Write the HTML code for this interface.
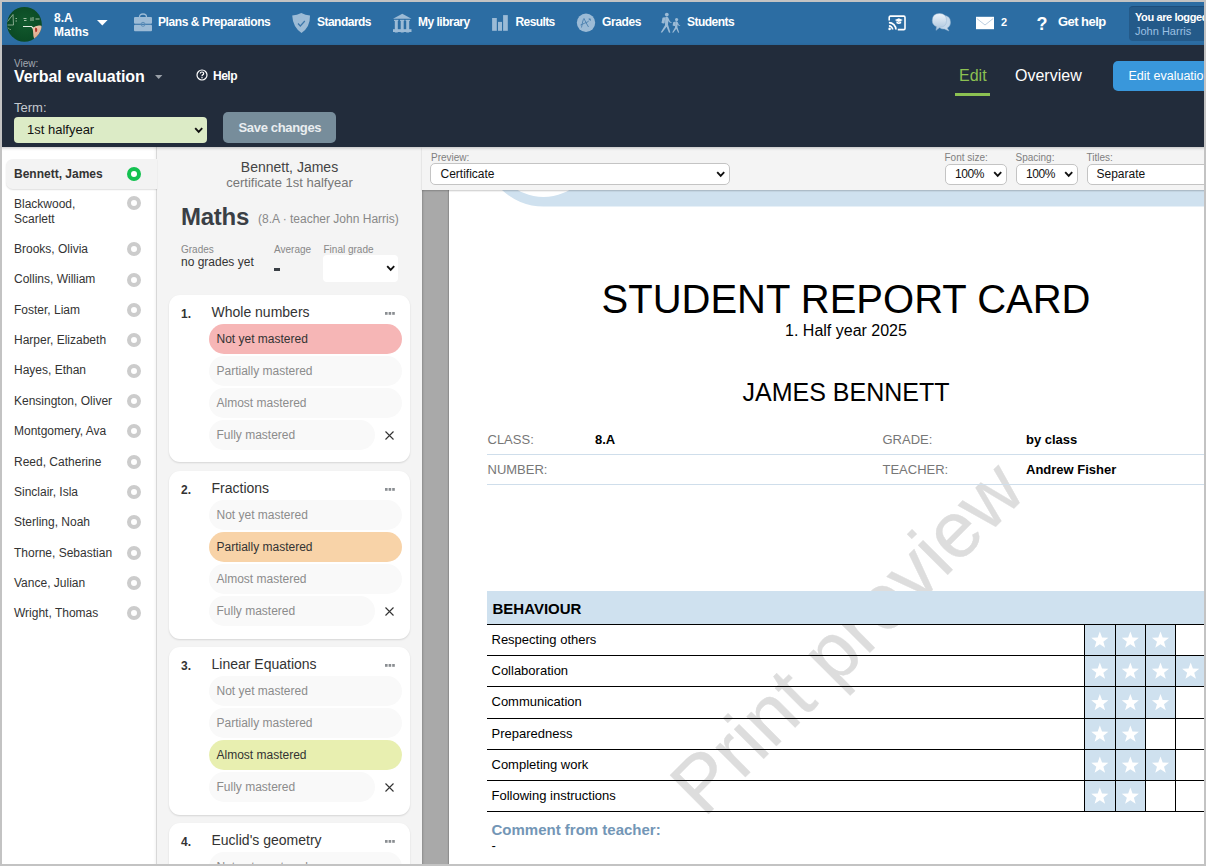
<!DOCTYPE html>
<html><head><meta charset="utf-8">
<style>
*{box-sizing:border-box;margin:0;padding:0}
html,body{width:1206px;height:866px;overflow:hidden;background:#fff;font-family:"Liberation Sans",sans-serif}
body{position:relative}
.a{position:absolute}
#border{position:absolute;left:0;top:0;width:1206px;height:866px;border:2px solid #c3c3c3;z-index:100}
#nav{position:absolute;left:0;top:0;width:1206px;height:45px;background:#2c6da3}
.nt{position:absolute;color:#fff;font-weight:bold;font-size:12px;white-space:nowrap;line-height:14px}
#hdr{position:absolute;left:0;top:45px;width:1206px;height:102px;background:#222c3b;z-index:10;box-shadow:0 1px 3px rgba(0,0,0,.22)}
#side{position:absolute;left:0;top:147px;width:157px;height:719px;background:#fff;border-right:1px solid #d8d8d8;z-index:2;box-shadow:inset -3px 0 3px -2px rgba(0,0,0,.05)}
.st{position:absolute;left:14px;font-size:12px;line-height:14.35px;color:#333;white-space:nowrap}
.rad{position:absolute;left:126.6px;width:14px;height:14px;border-radius:50%;border:4px solid #cccccc;background:#fff}
#mid{position:absolute;left:157px;top:147px;width:265px;height:719px;background:#f4f4f4}
#prev{position:absolute;left:422px;top:147px;width:784px;height:719px;background:#a9a9a9;box-shadow:inset 1px 0 2px rgba(0,0,0,.18)}
#tool{position:absolute;left:0;top:0;width:784px;height:43px;background:#f4f4f4;z-index:5;box-shadow:0 1px 1.5px rgba(0,0,0,.22)}
#page{position:absolute;left:27px;top:43px;width:757px;height:676px;background:#fff;overflow:hidden;box-shadow:-1px 0 1px rgba(0,0,0,.15)}
.card{position:absolute;left:12px;width:241px;height:167.5px;background:#fff;border-radius:11px;box-shadow:0 1px 2px rgba(0,0,0,.13)}
.num{position:absolute;left:12px;top:12px;font-size:12px;line-height:14px;font-weight:bold;color:#333}
.ct{position:absolute;left:42.5px;top:9px;font-size:14px;line-height:16px;color:#333;white-space:nowrap}
.opt{position:absolute;left:39.5px;width:193px;height:30px;border-radius:15px;background:#f9f9f9;font-size:12px;color:#8c8c8c;line-height:30px;padding-left:8px;white-space:nowrap}
.lb{font-size:10px;line-height:12px;color:#808080;white-space:nowrap}
.sbox{height:21.5px;background:#fff;border:1px solid #c4c4c4;border-radius:5px}
.sv{font-size:12px;line-height:14px;color:#111;white-space:nowrap}
.il{font-size:13px;line-height:15px;color:#777;white-space:nowrap}
.iv{font-size:13px;line-height:15px;color:#000;font-weight:bold;white-space:nowrap}
.tl{font-size:13px;line-height:15px;color:#000;white-space:nowrap}
</style></head><body>
<div id="border"></div>
<div id="nav">
 <svg class="a" style="left:0;top:0" width="50" height="45" viewBox="0 0 50 45">
  <defs><clipPath id="av"><circle cx="24.4" cy="24.3" r="17.4"/></clipPath>
  <radialGradient id="bg" cx="50%" cy="45%" r="60%"><stop offset="0" stop-color="#125a2e"/><stop offset="0.8" stop-color="#0b4a24"/><stop offset="1" stop-color="#073a1b"/></radialGradient></defs>
  <g clip-path="url(#av)">
   <rect x="6" y="6" width="38" height="38" fill="url(#bg)"/>
   <path d="M7.5 21.5 L13 14.5 L13.5 25 L7.5 25" stroke="#b9cdb6" stroke-width="0.7" fill="none"/>
   <path d="M15.5 18.5h1.5M15.5 21h1.5" stroke="#b9cdb6" stroke-width="0.8"/>
   <path d="M23.5 18.5h3M24 20.5h2.5M31 17.5v3.5M33 17v4M35.5 19h4" stroke="#c8d8c4" stroke-width="0.8"/>
   <path d="M23 26.5h8.5l2.5 2.5" stroke="#e6eee4" stroke-width="1.1" fill="none"/>
   <path d="M8 27.5l1.5 2M10 29l1 1" stroke="#9fb89c" stroke-width="0.7"/>
   <defs><linearGradient id="hd" x1="0" y1="0" x2="0.3" y2="1"><stop offset="0" stop-color="#f0c9b0"/><stop offset="1" stop-color="#d9a184"/></linearGradient></defs><path d="M32.5 28 Q36 25 40 25.5 Q43 26 43 30 L43 42 L34.5 40 Q33 36 33 31 Z" fill="url(#hd)"/>
   <path d="M35.2 27.8 Q37.3 27.3 37.3 30 Q37 32.5 35.5 32.3 Q34.7 30 35.2 27.8Z" fill="#b0342a"/>
  </g>
 </svg>
 <div class="nt" style="left:54px;top:10.6px;font-size:12px">8.A</div>
 <div class="nt" style="left:54px;top:24.8px;font-size:12px">Maths</div>
 <svg class="a" style="left:97px;top:20px" width="11" height="6"><path d="M0 0H10.6L5.3 5.4Z" fill="#fff"/></svg>
 <svg class="a" style="left:133px;top:13px" width="21" height="20" viewBox="0 0 21 20" fill="#9cbbd6">
  <path d="M6.5 4 Q6.5 1 10 1 Q13.5 1 13.5 4" stroke="#9cbbd6" stroke-width="1.3" fill="none"/>
  <rect x="1" y="4" width="18" height="6.8" rx="1"/>
  <rect x="1" y="11.8" width="18" height="6.4" rx="1"/>
  <circle cx="10" cy="11.3" r="2" fill="none" stroke="#5e8fb9" stroke-width="1"/>
 </svg>
 <div class="nt" style="left:158px;top:14.5px;font-size:12px;letter-spacing:-0.42px">Plans &amp; Preparations</div>
 <svg class="a" style="left:291px;top:12px" width="21" height="22" viewBox="0 0 21 22">
  <path d="M10.3 0.9 Q14.5 3 19 3.5 Q19.3 15 10.5 21 Q1.8 15 1.2 3.5 Q6 3 10.3 0.9Z" fill="#9cbbd6"/>
  <path d="M7 11.5 L9.3 14 L13.8 9" stroke="#3d77aa" stroke-width="1.2" fill="none"/>
 </svg>
 <div class="nt" style="left:317px;top:14.5px;font-size:12px;letter-spacing:-0.52px">Standards</div>
 <svg class="a" style="left:392px;top:13px" width="21" height="20" viewBox="0 0 21 20" fill="#9cbbd6">
  <path d="M10.3 0.7 L19.5 5.8 L1 5.8Z"/>
  <rect x="2" y="6.8" width="4.3" height="1.2"/><rect x="2.8" y="7.5" width="3" height="12" />
  <rect x="8.1" y="6.8" width="4.2" height="1.2"/><rect x="8.7" y="7.5" width="3" height="12"/>
  <rect x="13.6" y="6.8" width="4.3" height="1.2"/><rect x="14.2" y="7.5" width="3" height="12"/>
  <rect x="1" y="16.2" width="18.5" height="2.8"/>
 </svg>
 <div class="nt" style="left:418px;top:14.5px;font-size:12px;letter-spacing:-0.5px">My library</div>
 <svg class="a" style="left:492px;top:15px" width="17" height="17" viewBox="0 0 17 17" fill="#9cbbd6">
  <rect x="0.1" y="3" width="4.7" height="12.8"/><rect x="6" y="6.9" width="4" height="8.9"/><rect x="11.1" y="0.1" width="4.7" height="15.7"/>
 </svg>
 <div class="nt" style="left:515.5px;top:14.5px;font-size:12px;letter-spacing:-0.6px">Results</div>
 <svg class="a" style="left:576px;top:13px" width="20" height="20" viewBox="0 0 20 20">
  <circle cx="10" cy="9.7" r="9.2" fill="#9cbbd6"/>
  <path d="M5.5 14.5 Q7 6 8 5.5 Q9.5 9 12.5 14 M4.5 12 Q9 10 12.5 8.5 M13 5.2 l1.6 2.5 M12.6 7 l2.4 -1" stroke="#4a7fae" stroke-width="0.9" fill="none"/>
 </svg>
 <div class="nt" style="left:602px;top:14.5px;font-size:12px;letter-spacing:-0.4px">Grades</div>
 <svg class="a" style="left:660px;top:12px" width="22" height="22" viewBox="0 0 22 22" fill="#9cbbd6">
  <circle cx="6.8" cy="2.6" r="1.9"/>
  <path d="M5.2 5.2 Q7 4.3 8.2 5.4 L10 9.5 L11.7 10.3 L11.3 11 L9.2 10.3 L8.4 8.8 L8 12.5 L10.4 20.5 L9 20.8 L6.6 14.8 L2 20.8 L0.8 20.2 L5 13.3 Z"/>
  <path d="M2.5 5.8 Q4 4.8 5.2 5.6 L4.6 11.3 Q2.6 11.6 1.5 10.8 Z"/>
  <circle cx="16.6" cy="7.6" r="1.6"/>
  <path d="M15.3 9.6 Q16.7 9 17.6 9.9 L18.9 12.7 L20.3 13.4 L20 14 L18.3 13.4 L17.6 12.4 L17.4 15.3 L19.2 20.5 L18.2 20.8 L16.3 16.7 L13.2 20.8 L12.2 20.4 L15 15.5 Z"/>
  <path d="M13.2 10.3 Q14.3 9.6 15.3 10 L15 14 Q13.6 14.3 12.6 13.6 Z"/>
 </svg>
 <div class="nt" style="left:687px;top:14.5px;font-size:12px;letter-spacing:-0.54px">Students</div>
 <svg class="a" style="left:888px;top:15px" width="19" height="16" viewBox="0 0 19 16">
  <path d="M1.2 5.5 V2.4 Q1.2 1.1 2.4 1.1 H15.8 Q17 1.1 17 2.4 V13.4 Q17 14.6 15.8 14.6 H9.8" stroke="#fff" stroke-width="1.6" fill="none"/>
  <path d="M0.9 7.6 A7 7 0 0 1 7.9 14.6 M0.9 10.9 A3.7 3.7 0 0 1 4.6 14.6" stroke="#fff" stroke-width="1.7" fill="none"/>
  <circle cx="1.6" cy="13.9" r="1.3" fill="#fff"/>
  <path d="M10.8 3.3 L14.8 5.1 L10.8 6.9 L6.8 5.1Z M8.4 6.3 V8.2 Q10.8 9.8 13.2 8.2 V6.3 L10.8 7.5Z" fill="#fff"/>
 </svg>
 <svg class="a" style="left:931px;top:13px" width="21" height="19" viewBox="0 0 21 19">
  <defs><linearGradient id="cg" x1="0" y1="0" x2="0" y2="1"><stop offset="0" stop-color="#eef4fa"/><stop offset="1" stop-color="#a8c3dc"/></linearGradient></defs>
  <path d="M12.5 2.5 Q19.5 2.5 19.5 9.3 Q19.5 13.5 16.3 15 L18 18 L13.4 16 Q8 16.5 7 11 Z" fill="#c5d8ea" stroke="#8fb0cf" stroke-width="0.5"/>
  <path d="M8.5 0.5 Q15.5 0.5 15.5 7.5 Q15.5 14 9 14.3 L5 17.3 L5.7 13.7 Q1.3 12 1.3 7.5 Q1.3 0.5 8.5 0.5Z" fill="url(#cg)" stroke="#9db9d4" stroke-width="0.5"/>
 </svg>
 <svg class="a" style="left:976px;top:16px" width="19" height="14" viewBox="0 0 19 14">
  <rect x="0" y="0.8" width="18" height="12.4" fill="#fff"/>
  <path d="M0.8 2.5 L9 9 L17.2 2.5" stroke="#9db9d4" stroke-width="0.7" fill="none"/>
 </svg>
 <div class="nt" style="left:1001px;top:15px;font-size:11px">2</div>
 <div class="nt" style="left:1036.5px;top:13.5px;font-size:18px;line-height:20px">?</div>
 <div class="nt" style="left:1058px;top:14.5px;font-size:13px;letter-spacing:-0.55px">Get help</div>
 <div class="a" style="left:1129px;top:6px;width:90px;height:35px;background:#245a89;border-radius:4px;border-top:1px solid #1d4e7c"></div>
 <div class="nt" style="left:1135px;top:9.5px;font-size:11px;letter-spacing:-0.4px">You are logged in</div>
 <div class="nt" style="left:1135px;top:23.8px;font-size:11px;font-weight:normal;color:#9cc0e3">John Harris</div>
</div>
<div id="hdr">
 <div class="a" style="left:14px;top:12.5px;font-size:10px;line-height:12px;color:#a3a9b1">View:</div>
 <div class="a" style="left:14px;top:22.5px;font-size:16px;line-height:18px;font-weight:bold;color:#fff;white-space:nowrap;letter-spacing:-0.05px">Verbal evaluation</div>
 <svg class="a" style="left:155px;top:29.5px" width="8" height="5"><path d="M0 0H7.4L3.7 4Z" fill="#9aa0a8"/></svg>
 <svg class="a" style="left:195.5px;top:24px" width="12" height="12" viewBox="0 0 12 12"><circle cx="6" cy="6" r="5" stroke="#fff" stroke-width="1.2" fill="none"/><path d="M4.3 4.6 Q4.3 3 6 3 Q7.7 3 7.7 4.5 Q7.7 5.4 6.6 5.9 Q6 6.2 6 7.2" stroke="#fff" stroke-width="1.2" fill="none"/><circle cx="6" cy="8.8" r="0.75" fill="#fff"/></svg>
 <div class="a" style="left:213px;top:23.5px;font-size:12px;line-height:14px;font-weight:bold;color:#fff;letter-spacing:-0.5px">Help</div>
 <div class="a" style="left:14px;top:54.5px;font-size:13px;line-height:15px;color:#c3c8ce">Term:</div>
 <div class="a" style="left:14px;top:72px;width:193px;height:26px;background:#dcebc6;border-radius:4px"></div>
 <div class="a" style="left:27px;top:76.5px;font-size:13px;line-height:15px;color:#111">1st halfyear</div>
 <svg class="a" style="left:194px;top:82px" width="10" height="7" viewBox="0 0 10 7"><path d="M1.2 1.2 L4.7 4.8 L8.2 1.2" stroke="#111" stroke-width="1.9" fill="none"/></svg>
 <div class="a" style="left:223px;top:67px;width:113px;height:31px;background:#778d9b;border-radius:5px"></div>
 <div class="a" style="left:238.5px;top:74.5px;font-size:13px;line-height:15px;font-weight:bold;color:#e9edf0;letter-spacing:-0.33px">Save changes</div>
 <div class="a" style="left:959px;top:21.5px;font-size:16px;line-height:18px;color:#8cc152">Edit</div>
 <div class="a" style="left:955px;top:48px;width:35px;height:2.5px;background:#8cc152"></div>
 <div class="a" style="left:1015px;top:21.5px;font-size:16px;line-height:18px;color:#fff">Overview</div>
 <div class="a" style="left:1113px;top:16px;width:120px;height:30px;background:#3997db;border-radius:5px"></div>
 <div class="a" style="left:1128.5px;top:23.5px;font-size:12.5px;line-height:15px;color:#fff;white-space:nowrap">Edit evaluation</div>
</div>
<div id="side">
<div class="a" style="left:6px;top:12.00px;width:151px;height:30.35px;background:#f3f3f3;border-radius:7px 0 0 7px;box-shadow:0 1px 1.5px rgba(0,0,0,.13);z-index:3"></div>
<div class="st" style="top:20.00px;font-weight:bold;z-index:4">Bennett, James</div>
<div class="rad" style="top:20.18px;border-color:#13c150;z-index:4"></div>
<div class="st" style="top:50.35px;z-index:4">Blackwood,<br>Scarlett</div>
<div class="rad" style="top:49.35px;border-color:#cccccc;z-index:4"></div>
<div class="st" style="top:95.05px;z-index:4">Brooks, Olivia</div>
<div class="rad" style="top:95.23px;border-color:#cccccc;z-index:4"></div>
<div class="st" style="top:125.40px;z-index:4">Collins, William</div>
<div class="rad" style="top:125.58px;border-color:#cccccc;z-index:4"></div>
<div class="st" style="top:155.75px;z-index:4">Foster, Liam</div>
<div class="rad" style="top:155.93px;border-color:#cccccc;z-index:4"></div>
<div class="st" style="top:186.10px;z-index:4">Harper, Elizabeth</div>
<div class="rad" style="top:186.28px;border-color:#cccccc;z-index:4"></div>
<div class="st" style="top:216.45px;z-index:4">Hayes, Ethan</div>
<div class="rad" style="top:216.63px;border-color:#cccccc;z-index:4"></div>
<div class="st" style="top:246.80px;z-index:4">Kensington, Oliver</div>
<div class="rad" style="top:246.98px;border-color:#cccccc;z-index:4"></div>
<div class="st" style="top:277.15px;z-index:4">Montgomery, Ava</div>
<div class="rad" style="top:277.33px;border-color:#cccccc;z-index:4"></div>
<div class="st" style="top:307.50px;z-index:4">Reed, Catherine</div>
<div class="rad" style="top:307.68px;border-color:#cccccc;z-index:4"></div>
<div class="st" style="top:337.85px;z-index:4">Sinclair, Isla</div>
<div class="rad" style="top:338.03px;border-color:#cccccc;z-index:4"></div>
<div class="st" style="top:368.20px;z-index:4">Sterling, Noah</div>
<div class="rad" style="top:368.38px;border-color:#cccccc;z-index:4"></div>
<div class="st" style="top:398.55px;z-index:4">Thorne, Sebastian</div>
<div class="rad" style="top:398.73px;border-color:#cccccc;z-index:4"></div>
<div class="st" style="top:428.90px;z-index:4">Vance, Julian</div>
<div class="rad" style="top:429.08px;border-color:#cccccc;z-index:4"></div>
<div class="st" style="top:459.25px;z-index:4">Wright, Thomas</div>
<div class="rad" style="top:459.43px;border-color:#cccccc;z-index:4"></div>
</div>
<div id="mid">
<div class="a" style="left:0;top:11.5px;width:265px;text-align:center;font-size:14px;line-height:16px;color:#444">Bennett, James</div>
<div class="a" style="left:0;top:27.5px;width:265px;text-align:center;font-size:13px;line-height:15px;color:#777">certificate 1st halfyear</div>
<div class="a" style="left:24px;top:55.5px;font-size:24px;line-height:27px;font-weight:bold;color:#3a3f45;letter-spacing:-0.25px">Maths</div>
<div class="a" style="left:101px;top:64.5px;font-size:12px;line-height:14px;color:#888;white-space:nowrap">(8.A · teacher John Harris)</div>
<div class="a" style="left:24px;top:97px;font-size:10px;line-height:12px;color:#888">Grades</div>
<div class="a" style="left:24px;top:108px;font-size:12px;line-height:14px;color:#333;white-space:nowrap">no grades yet</div>
<div class="a" style="left:117px;top:97px;font-size:10px;line-height:12px;color:#888">Average</div>
<div class="a" style="left:117px;top:120.5px;width:6px;height:3px;background:#3a3f45"></div>
<div class="a" style="left:166.5px;top:97px;font-size:10px;line-height:12px;color:#888;white-space:nowrap">Final grade</div>
<div class="a" style="left:166px;top:108px;width:75px;height:27px;background:#fff;border-radius:4px"></div>
<svg class="a" style="left:229px;top:118px" width="10" height="7" viewBox="0 0 10 7"><path d="M1.2 1.2 L4.7 4.8 L8.2 1.2" stroke="#111" stroke-width="1.9" fill="none"/></svg>
<div class="card" style="top:147.5px"><div class="num">1.</div><div class="ct">Whole numbers</div><svg class="a" style="left:216px;top:17px" width="11" height="3"><rect x="0" y="0" width="2.6" height="2.8" fill="#8a8e92"/><rect x="3.6" y="0" width="2.6" height="2.8" fill="#8a8e92"/><rect x="7.2" y="0" width="2.6" height="2.8" fill="#8a8e92"/></svg><div class="opt" style="top:29.3px;background:#f6b6b6;color:#333;">Not yet mastered</div><div class="opt" style="top:61.3px;">Partially mastered</div><div class="opt" style="top:93.3px;">Almost mastered</div><div class="opt" style="top:125.3px;width:166px;">Fully mastered</div><svg class="a" style="left:216px;top:136px" width="9" height="9" viewBox="0 0 9 9"><path d="M0.5 0.5L8.5 8.5M8.5 0.5L0.5 8.5" stroke="#333" stroke-width="1.1"/></svg></div>
<div class="card" style="top:324px"><div class="num">2.</div><div class="ct">Fractions</div><svg class="a" style="left:216px;top:17px" width="11" height="3"><rect x="0" y="0" width="2.6" height="2.8" fill="#8a8e92"/><rect x="3.6" y="0" width="2.6" height="2.8" fill="#8a8e92"/><rect x="7.2" y="0" width="2.6" height="2.8" fill="#8a8e92"/></svg><div class="opt" style="top:29.3px;">Not yet mastered</div><div class="opt" style="top:61.3px;background:#f8d3a8;color:#333;">Partially mastered</div><div class="opt" style="top:93.3px;">Almost mastered</div><div class="opt" style="top:125.3px;width:166px;">Fully mastered</div><svg class="a" style="left:216px;top:136px" width="9" height="9" viewBox="0 0 9 9"><path d="M0.5 0.5L8.5 8.5M8.5 0.5L0.5 8.5" stroke="#333" stroke-width="1.1"/></svg></div>
<div class="card" style="top:500.2px"><div class="num">3.</div><div class="ct">Linear Equations</div><svg class="a" style="left:216px;top:17px" width="11" height="3"><rect x="0" y="0" width="2.6" height="2.8" fill="#8a8e92"/><rect x="3.6" y="0" width="2.6" height="2.8" fill="#8a8e92"/><rect x="7.2" y="0" width="2.6" height="2.8" fill="#8a8e92"/></svg><div class="opt" style="top:29.3px;">Not yet mastered</div><div class="opt" style="top:61.3px;">Partially mastered</div><div class="opt" style="top:93.3px;background:#e8efb0;color:#333;">Almost mastered</div><div class="opt" style="top:125.3px;width:166px;">Fully mastered</div><svg class="a" style="left:216px;top:136px" width="9" height="9" viewBox="0 0 9 9"><path d="M0.5 0.5L8.5 8.5M8.5 0.5L0.5 8.5" stroke="#333" stroke-width="1.1"/></svg></div>
<div class="card" style="top:676px"><div class="num">4.</div><div class="ct">Euclid's geometry</div><svg class="a" style="left:216px;top:17px" width="11" height="3"><rect x="0" y="0" width="2.6" height="2.8" fill="#8a8e92"/><rect x="3.6" y="0" width="2.6" height="2.8" fill="#8a8e92"/><rect x="7.2" y="0" width="2.6" height="2.8" fill="#8a8e92"/></svg><div class="opt" style="top:29.3px;">Not yet mastered</div><div class="opt" style="top:61.3px;">Partially mastered</div><div class="opt" style="top:93.3px;">Almost mastered</div><div class="opt" style="top:125.3px;width:166px;">Fully mastered</div><svg class="a" style="left:216px;top:136px" width="9" height="9" viewBox="0 0 9 9"><path d="M0.5 0.5L8.5 8.5M8.5 0.5L0.5 8.5" stroke="#333" stroke-width="1.1"/></svg></div>
</div>
<div id="prev">
 <div id="tool">
<div class="a lb" style="left:9.0px;top:4.5px;">Preview:</div>
<div class="a sbox" style="left:7.8px;top:16.2px;width:300px"></div>
<div class="a sv" style="left:18.5px;top:19.5px;">Certificate</div>
<svg class="a" style="left:294.0px;top:24.0px;" width="10" height="7" viewBox="0 0 10 7"><path d="M1.2 1.2 L4.7 4.8 L8.2 1.2" stroke="#111" stroke-width="1.9" fill="none"/></svg>
<div class="a lb" style="left:522.5px;top:4.5px;">Font size:</div>
<div class="a sbox" style="left:522.5px;top:16.5px;width:62px"></div>
<div class="a sv" style="left:533.0px;top:19.5px;letter-spacing:-0.4px">100%</div>
<svg class="a" style="left:571.0px;top:24.0px;" width="10" height="7" viewBox="0 0 10 7"><path d="M1.2 1.2 L4.7 4.8 L8.2 1.2" stroke="#111" stroke-width="1.9" fill="none"/></svg>
<div class="a lb" style="left:593.5px;top:4.5px;">Spacing:</div>
<div class="a sbox" style="left:593.5px;top:16.5px;width:62px"></div>
<div class="a sv" style="left:604.0px;top:19.5px;letter-spacing:-0.4px">100%</div>
<svg class="a" style="left:642.0px;top:24.0px;" width="10" height="7" viewBox="0 0 10 7"><path d="M1.2 1.2 L4.7 4.8 L8.2 1.2" stroke="#111" stroke-width="1.9" fill="none"/></svg>
<div class="a lb" style="left:664.5px;top:4.5px;">Titles:</div>
<div class="a sbox" style="left:664.5px;top:16.5px;width:140px"></div>
<div class="a sv" style="left:674.5px;top:19.5px;">Separate</div>
</div>
 <div id="page">
<svg class="a" style="left:0;top:0" width="757" height="30" viewBox="449 190 757 30"><path d="M543.5 206.5 A60.5 60.5 0 1 1 543.5 85.5 L1300 85.5 L1300 206.5 Z M543.5 197 A51 51 0 1 0 543.5 95 A51 51 0 1 0 543.5 197 Z" fill="#cfe1ef" fill-rule="evenodd"/></svg>
<svg class="a" style="left:0;top:0" width="757" height="676" viewBox="449 190 757 676"><text x="704" y="818.5" transform="rotate(-45 704 818.5)" font-family="Liberation Sans" font-size="79.3" fill="#dddddd" stroke="#dddddd" stroke-width="0.35">Print preview</text></svg>
<div class="a" style="left:0;top:85.5px;width:794px;text-align:center;font-size:40px;line-height:46px;color:#000;white-space:nowrap">STUDENT REPORT CARD</div>
<div class="a" style="left:0;top:132.0px;width:794px;text-align:center;font-size:16px;line-height:18px;color:#000;white-space:nowrap">1. Half year 2025</div>
<div class="a" style="left:0;top:187.5px;width:794px;text-align:center;font-size:25px;line-height:29px;color:#000;white-space:nowrap">JAMES BENNETT</div>
<div class="a il" style="left:38.5px;top:242.0px;">CLASS:</div>
<div class="a iv" style="left:146.0px;top:242.0px;">8.A</div>
<div class="a il" style="left:433.5px;top:242.0px;">GRADE:</div>
<div class="a iv" style="left:577.0px;top:242.0px;">by class</div>
<div class="a il" style="left:38.5px;top:271.5px;">NUMBER:</div>
<div class="a il" style="left:433.5px;top:271.5px;">TEACHER:</div>
<div class="a iv" style="left:577.0px;top:271.5px;">Andrew Fisher</div>
<div class="a" style="left:38.0px;top:264.0px;width:800px;height:1px;background:#cfdeeb"></div>
<div class="a" style="left:38.0px;top:294.0px;width:800px;height:1px;background:#cfdeeb"></div>
<div class="a" style="left:38.0px;top:401.0px;width:800px;height:33px;background:#cfe1ef"></div>
<div class="a" style="left:43.5px;top:409.7px;font-size:15px;line-height:17px;font-weight:bold;color:#000">BEHAVIOUR</div>
<div class="a" style="left:635.6px;top:434.0px;width:30.7px;height:31px;background:#cfe1ef"></div>
<svg class="a" style="left:0;top:0;overflow:visible" width="1" height="1"><polygon points="650.85,441.50 653.02,447.51 659.41,447.72 654.36,451.64 656.14,457.78 650.85,454.19 645.56,457.78 647.34,451.64 642.29,447.72 648.68,447.51" fill="#fff"/></svg>
<div class="a" style="left:666.3px;top:434.0px;width:30.3px;height:31px;background:#cfe1ef"></div>
<svg class="a" style="left:0;top:0;overflow:visible" width="1" height="1"><polygon points="681.35,441.50 683.52,447.51 689.91,447.72 684.86,451.64 686.64,457.78 681.35,454.19 676.06,457.78 677.84,451.64 672.79,447.72 679.18,447.51" fill="#fff"/></svg>
<div class="a" style="left:696.6px;top:434.0px;width:30.0px;height:31px;background:#cfe1ef"></div>
<svg class="a" style="left:0;top:0;overflow:visible" width="1" height="1"><polygon points="711.50,441.50 713.67,447.51 720.06,447.72 715.01,451.64 716.79,457.78 711.50,454.19 706.21,457.78 707.99,451.64 702.94,447.72 709.33,447.51" fill="#fff"/></svg>
<div class="a tl" style="left:42.5px;top:441.5px;">Respecting others</div>
<div class="a" style="left:635.6px;top:465.0px;width:30.7px;height:31px;background:#cfe1ef"></div>
<svg class="a" style="left:0;top:0;overflow:visible" width="1" height="1"><polygon points="650.85,472.50 653.02,478.51 659.41,478.72 654.36,482.64 656.14,488.78 650.85,485.19 645.56,488.78 647.34,482.64 642.29,478.72 648.68,478.51" fill="#fff"/></svg>
<div class="a" style="left:666.3px;top:465.0px;width:30.3px;height:31px;background:#cfe1ef"></div>
<svg class="a" style="left:0;top:0;overflow:visible" width="1" height="1"><polygon points="681.35,472.50 683.52,478.51 689.91,478.72 684.86,482.64 686.64,488.78 681.35,485.19 676.06,488.78 677.84,482.64 672.79,478.72 679.18,478.51" fill="#fff"/></svg>
<div class="a" style="left:696.6px;top:465.0px;width:30.0px;height:31px;background:#cfe1ef"></div>
<svg class="a" style="left:0;top:0;overflow:visible" width="1" height="1"><polygon points="711.50,472.50 713.67,478.51 720.06,478.72 715.01,482.64 716.79,488.78 711.50,485.19 706.21,488.78 707.99,482.64 702.94,478.72 709.33,478.51" fill="#fff"/></svg>
<div class="a" style="left:726.6px;top:465.0px;width:30.4px;height:31px;background:#cfe1ef"></div>
<svg class="a" style="left:0;top:0;overflow:visible" width="1" height="1"><polygon points="741.70,472.50 743.87,478.51 750.26,478.72 745.21,482.64 746.99,488.78 741.70,485.19 736.41,488.78 738.19,482.64 733.14,478.72 739.53,478.51" fill="#fff"/></svg>
<div class="a tl" style="left:42.5px;top:472.5px;">Collaboration</div>
<div class="a" style="left:635.6px;top:496.0px;width:30.7px;height:32px;background:#cfe1ef"></div>
<svg class="a" style="left:0;top:0;overflow:visible" width="1" height="1"><polygon points="650.85,504.00 653.02,510.01 659.41,510.22 654.36,514.14 656.14,520.28 650.85,516.69 645.56,520.28 647.34,514.14 642.29,510.22 648.68,510.01" fill="#fff"/></svg>
<div class="a" style="left:666.3px;top:496.0px;width:30.3px;height:32px;background:#cfe1ef"></div>
<svg class="a" style="left:0;top:0;overflow:visible" width="1" height="1"><polygon points="681.35,504.00 683.52,510.01 689.91,510.22 684.86,514.14 686.64,520.28 681.35,516.69 676.06,520.28 677.84,514.14 672.79,510.22 679.18,510.01" fill="#fff"/></svg>
<div class="a" style="left:696.6px;top:496.0px;width:30.0px;height:32px;background:#cfe1ef"></div>
<svg class="a" style="left:0;top:0;overflow:visible" width="1" height="1"><polygon points="711.50,504.00 713.67,510.01 720.06,510.22 715.01,514.14 716.79,520.28 711.50,516.69 706.21,520.28 707.99,514.14 702.94,510.22 709.33,510.01" fill="#fff"/></svg>
<div class="a tl" style="left:42.5px;top:503.5px;">Communication</div>
<div class="a" style="left:635.6px;top:528.0px;width:30.7px;height:31px;background:#cfe1ef"></div>
<svg class="a" style="left:0;top:0;overflow:visible" width="1" height="1"><polygon points="650.85,535.50 653.02,541.51 659.41,541.72 654.36,545.64 656.14,551.78 650.85,548.19 645.56,551.78 647.34,545.64 642.29,541.72 648.68,541.51" fill="#fff"/></svg>
<div class="a" style="left:666.3px;top:528.0px;width:30.3px;height:31px;background:#cfe1ef"></div>
<svg class="a" style="left:0;top:0;overflow:visible" width="1" height="1"><polygon points="681.35,535.50 683.52,541.51 689.91,541.72 684.86,545.64 686.64,551.78 681.35,548.19 676.06,551.78 677.84,545.64 672.79,541.72 679.18,541.51" fill="#fff"/></svg>
<div class="a tl" style="left:42.5px;top:535.5px;">Preparedness</div>
<div class="a" style="left:635.6px;top:559.0px;width:30.7px;height:31px;background:#cfe1ef"></div>
<svg class="a" style="left:0;top:0;overflow:visible" width="1" height="1"><polygon points="650.85,566.50 653.02,572.51 659.41,572.72 654.36,576.64 656.14,582.78 650.85,579.19 645.56,582.78 647.34,576.64 642.29,572.72 648.68,572.51" fill="#fff"/></svg>
<div class="a" style="left:666.3px;top:559.0px;width:30.3px;height:31px;background:#cfe1ef"></div>
<svg class="a" style="left:0;top:0;overflow:visible" width="1" height="1"><polygon points="681.35,566.50 683.52,572.51 689.91,572.72 684.86,576.64 686.64,582.78 681.35,579.19 676.06,582.78 677.84,576.64 672.79,572.72 679.18,572.51" fill="#fff"/></svg>
<div class="a" style="left:696.6px;top:559.0px;width:30.0px;height:31px;background:#cfe1ef"></div>
<svg class="a" style="left:0;top:0;overflow:visible" width="1" height="1"><polygon points="711.50,566.50 713.67,572.51 720.06,572.72 715.01,576.64 716.79,582.78 711.50,579.19 706.21,582.78 707.99,576.64 702.94,572.72 709.33,572.51" fill="#fff"/></svg>
<div class="a tl" style="left:42.5px;top:566.5px;">Completing work</div>
<div class="a" style="left:635.6px;top:590.0px;width:30.7px;height:31px;background:#cfe1ef"></div>
<svg class="a" style="left:0;top:0;overflow:visible" width="1" height="1"><polygon points="650.85,597.50 653.02,603.51 659.41,603.72 654.36,607.64 656.14,613.78 650.85,610.19 645.56,613.78 647.34,607.64 642.29,603.72 648.68,603.51" fill="#fff"/></svg>
<div class="a" style="left:666.3px;top:590.0px;width:30.3px;height:31px;background:#cfe1ef"></div>
<svg class="a" style="left:0;top:0;overflow:visible" width="1" height="1"><polygon points="681.35,597.50 683.52,603.51 689.91,603.72 684.86,607.64 686.64,613.78 681.35,610.19 676.06,613.78 677.84,607.64 672.79,603.72 679.18,603.51" fill="#fff"/></svg>
<div class="a tl" style="left:42.5px;top:597.5px;">Following instructions</div>
<div class="a" style="left:38.0px;top:434.0px;width:800px;height:1px;background:#000"></div>
<div class="a" style="left:38.0px;top:465.0px;width:800px;height:1px;background:#000"></div>
<div class="a" style="left:38.0px;top:496.0px;width:800px;height:1px;background:#000"></div>
<div class="a" style="left:38.0px;top:528.0px;width:800px;height:1px;background:#000"></div>
<div class="a" style="left:38.0px;top:559.0px;width:800px;height:1px;background:#000"></div>
<div class="a" style="left:38.0px;top:590.0px;width:800px;height:1px;background:#000"></div>
<div class="a" style="left:38.0px;top:621.0px;width:800px;height:1px;background:#000"></div>
<div class="a" style="left:635.0px;top:434.0px;width:1px;height:187px;background:#000"></div>
<div class="a" style="left:666.0px;top:434.0px;width:1px;height:187px;background:#000"></div>
<div class="a" style="left:696.0px;top:434.0px;width:1px;height:187px;background:#000"></div>
<div class="a" style="left:726.0px;top:434.0px;width:1px;height:187px;background:#000"></div>
<div class="a" style="left:757.0px;top:434.0px;width:1px;height:187px;background:#000"></div>
<div class="a" style="left:42.5px;top:630.7px;font-size:15px;line-height:17px;font-weight:bold;color:#7396b6;white-space:nowrap">Comment from teacher:</div>
<div class="a" style="left:42.5px;top:648.0px;font-size:13px;line-height:15px;color:#000">-</div>
</div>
</div>
</body></html>
